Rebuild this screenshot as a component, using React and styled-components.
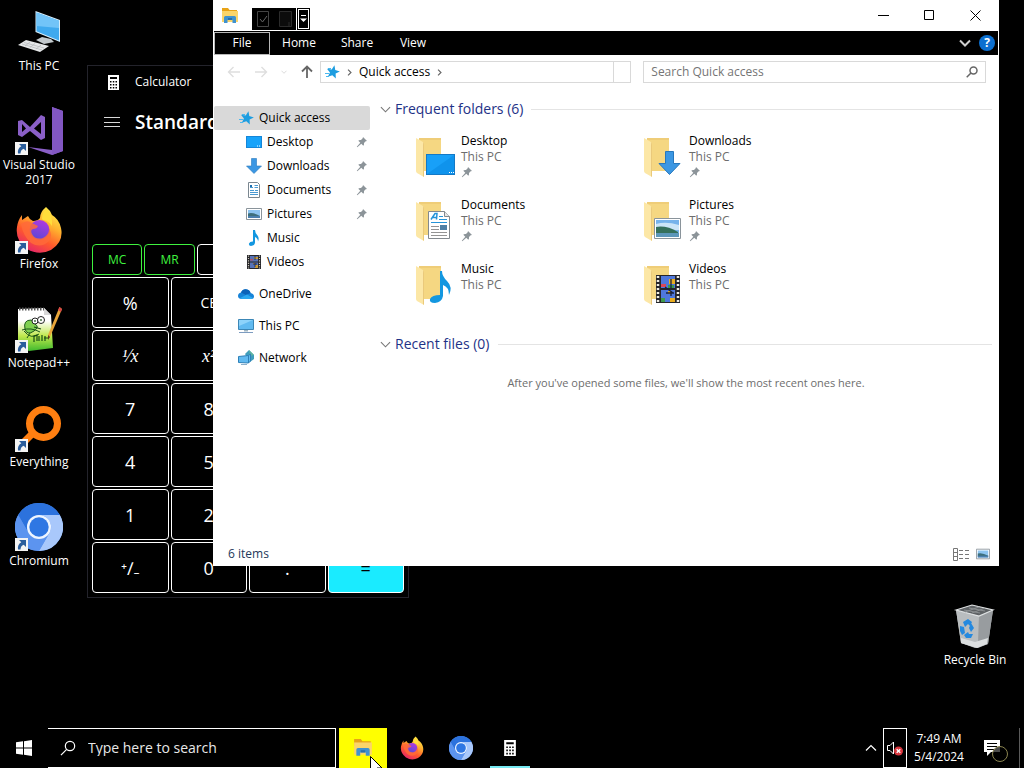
import React from "react";
import styled, { createGlobalStyle, css } from "styled-components";

const GlobalStyle = createGlobalStyle`
  *, *::before, *::after { box-sizing: border-box; }
  html, body { margin: 0; background: #000; }
  body, button, input {
    font-family: "Open Sans", "Noto Sans", sans-serif;
    font-size: 12px;
    line-height: 16px;
  }
  button { margin: 0; padding: 0; border: 0; background: none; color: inherit; cursor: default; }
  ul { list-style: none; margin: 0; padding: 0; }
  h1, h2, p { margin: 0; font-weight: 400; }
  svg { display: block; flex: none; }
`;

/* ---------- layout ---------- */

const Screen = styled.div`
  display: flex;
  flex-direction: column;
  height: 100vh;
  overflow: hidden;
  background: #000;
  color: #fff;
`;

const Desktop = styled.main`
  position: relative;
  flex: 1;
  min-height: 0;
`;

const IconColumn = styled.ul`
  display: flex;
  flex-direction: column;
  width: 78px;
  padding-top: 8px;
`;

const ShortcutCell = styled.li`
  height: 99px;
`;

const ShortcutButton = styled.button`
  display: flex;
  flex-direction: column;
  align-items: center;
  gap: 2px;
  width: 78px;
  line-height: 15px;
`;

const ShortcutArt = styled.span`
  position: relative;
  width: 48px;
  height: 48px;
`;

const ArrowBadge = styled.span`
  position: absolute;
  left: 0;
  bottom: 0;
`;

const BinSpot = styled.div`
  position: absolute;
  right: 10px;
  bottom: 61px;
`;

/* ---------- calculator ---------- */

const CalcWindow = styled.section`
  position: absolute;
  left: 87px;
  top: 65px;
  width: 322px;
  padding: 0 4px 4px;
  border: 1px solid #23232b;
  background: #000;
`;

const CalcTitle = styled.header`
  display: flex;
  align-items: center;
  gap: 16px;
  height: 32px;
  padding-left: 16px;
`;

const CalcMode = styled.div`
  display: flex;
  align-items: center;
  gap: 15px;
  height: 48px;
  padding-left: 12px;
`;

const CalcModeName = styled.h2`
  font-size: 19px;
  line-height: 24px;
  font-weight: 600;
`;

const CalcDisplay = styled.output`
  display: block;
  height: 98px;
`;

const MemoryRow = styled.div`
  display: grid;
  grid-template-columns: repeat(6, 1fr);
  gap: 2px;
  margin-bottom: 2px;
`;

const KeyGrid = styled.div`
  display: grid;
  grid-template-columns: repeat(4, 1fr);
  gap: 2px;
`;

const CalcKey = styled.button`
  height: ${(p) => (p.$memory ? 31 : 51)}px;
  border: 1px solid ${(p) => (p.$disabled ? "#3ff23f" : "#fff")};
  border-radius: 4px;
  color: ${(p) => (p.$disabled ? "#3ff23f" : "#fff")};
  font-size: ${(p) => (p.$memory ? 12 : p.$digit ? 18 : 14)}px;
  ${(p) =>
    p.$equals &&
    css`
      background: #1aebff;
      color: #000;
    `}
`;

/* ---------- explorer ---------- */

const ExplorerWindow = styled.section`
  position: absolute;
  left: 213px;
  right: 25px;
  top: 0;
  padding: 0 1px;
  background: #fff;
  color: #000;
`;

const TitleBar = styled.header`
  display: flex;
  justify-content: space-between;
  height: 31px;
`;

const QuickTools = styled.div`
  display: flex;
  align-items: center;
  padding: 7px 0 0 7px;
`;

const AppMark = styled.span`
  padding-bottom: 6px;
`;

const ToolBlock = styled.div`
  display: flex;
  align-items: center;
  gap: 9px;
  height: 22px;
  margin: 0 1px 0 13px;
  padding: 0 4px;
  background: #000;
`;

const ToolMenu = styled.button`
  display: grid;
  place-items: center;
  width: 13px;
  height: 22px;
  border: 1px solid #000;
  outline: 1px solid #fff;
  outline-offset: -2px;
  background: #000;
`;

const WindowButtons = styled.div`
  display: flex;
`;

const WindowButton = styled.button`
  display: grid;
  place-items: center;
  width: 46px;
  height: 30px;
`;

const Ribbon = styled.nav`
  display: flex;
  align-items: center;
  height: 24px;
  background: #000;
  color: #fff;
`;

const RibbonTab = styled.button`
  width: ${(p) => p.$width}px;
  height: 23px;
  ${(p) =>
    p.$boxed &&
    css`
      border: 1px solid #b8b8b8;
    `}
`;

const RibbonEnd = styled.div`
  display: flex;
  align-items: center;
  gap: 8px;
  margin-left: auto;
  padding-right: 3px;
`;

const HelpButton = styled.button`
  width: 16px;
  height: 16px;
  border-radius: 50%;
  background: #0b6fd0;
  color: #fff;
  font-weight: 700;
`;

const NavBar = styled.div`
  display: flex;
  align-items: center;
  height: 34px;
  padding: 0 12px 0 13px;
`;

const NavArrows = styled.div`
  display: flex;
  align-items: center;
  width: 93px;
  gap: 13px;
`;

const AddressBar = styled.div`
  display: flex;
  align-items: center;
  flex: 15 1 0;
  height: 22px;
  border: 1px solid #d9d9d9;
  padding-left: 3px;
  gap: 6px;
`;

const Refresh = styled.button`
  width: 17px;
  height: 20px;
  margin-left: auto;
  border-left: 1px solid #d9d9d9;
`;

const SearchField = styled.label`
  display: flex;
  align-items: center;
  flex: 16 1 0;
  height: 22px;
  margin-left: 12px;
  padding: 0 7px;
  border: 1px solid #d9d9d9;
`;

const SearchInput = styled.input`
  flex: 1;
  min-width: 0;
  padding: 0;
  border: 0;
  outline: 0;
  background: none;
  color: inherit;
  font-size: ${(p) => (p.$large ? 14 : 12)}px;
  &::placeholder { color: ${(p) => (p.$large ? "#e8e8e8" : "#757575")}; opacity: 1; }
`;

const ExplorerBody = styled.div`
  display: flex;
  min-height: 453px;
`;

const Sidebar = styled.nav`
  flex: 0 0 156px;
  padding-top: 17px;
`;

const SideItem = styled.a`
  display: flex;
  align-items: center;
  gap: 5px;
  height: 24px;
  margin-top: ${(p) => (p.$spaced ? 8 : 0)}px;
  padding-left: ${(p) => (p.$nested ? 32 : 24)}px;
  padding-right: 2px;
  border-radius: 2px;
  background: ${(p) => (p.$selected ? "#d9d9d9" : "transparent")};
  color: #000;
  text-decoration: none;
`;

const SideLabel = styled.span`
  flex: 1;
  white-space: nowrap;
`;

const Content = styled.div`
  flex: 1;
  min-width: 0;
  padding: 9px 6px 0 10px;
`;

const GroupHeader = styled.button`
  display: flex;
  align-items: center;
  gap: 4px;
  width: 100%;
  height: 22px;
  font-size: 14px;
  line-height: 22px;
  color: #1e3287;
  &::after {
    content: "";
    flex: 1;
    height: 1px;
    margin-left: 4px;
    background: #e4e4e4;
  }
`;

const FolderGrid = styled.ul`
  display: grid;
  grid-template-columns: repeat(auto-fill, 228px);
  grid-auto-rows: 64px;
  padding: 0 0 0 35px;
  margin: 13px 0 8px;
`;

const FolderItem = styled.a`
  display: flex;
  gap: 4px;
  color: #000;
  text-decoration: none;
`;

const FolderText = styled.span`
  display: flex;
  flex-direction: column;
`;

const Location = styled.span`
  color: #6d6d6d;
  margin-bottom: 1px;
`;

const EmptyNote = styled.p`
  margin-top: 20px;
  text-align: center;
  font-size: 11px;
  color: #6d6d6d;
`;

const StatusBar = styled.footer`
  display: flex;
  align-items: center;
  justify-content: space-between;
  height: 24px;
  padding: 0 8px 0 14px;
  color: #1e395b;
`;

const ViewButtons = styled.div`
  display: flex;
  gap: 6px;
`;

/* ---------- taskbar ---------- */

const Taskbar = styled.footer`
  display: flex;
  flex: none;
  height: 40px;
  background: #000;
`;

const TaskButton = styled.button`
  position: relative;
  display: grid;
  place-items: center;
  width: 48px;
  height: 40px;
  background: ${(p) => (p.$active ? "#ffff00" : "transparent")};
  ${(p) =>
    p.$running &&
    css`
      &::after {
        content: "";
        position: absolute;
        left: 4px;
        right: 4px;
        bottom: 0;
        height: 2px;
        background: #76e9f2;
      }
    `}
`;

const TaskSearch = styled.label`
  display: flex;
  align-items: center;
  gap: 12px;
  width: 288px;
  padding-left: 12px;
  border: 1px solid #fff;
  border-left: 0;
`;

const TaskApps = styled.div`
  display: flex;
  gap: 1px;
  margin-left: 3px;
`;

const Pointer = styled.span`
  position: absolute;
  left: 31px;
  top: 28px;
`;

const Tray = styled.div`
  display: flex;
  align-items: stretch;
  margin-left: auto;
`;

const TrayButton = styled.button`
  display: grid;
  place-items: center;
  width: ${(p) => p.$width}px;
  border: ${(p) => (p.$boxed ? "1px solid #fff" : "0")};
`;

const Clock = styled.button`
  width: 64px;
  line-height: 18px;
`;

const ShowDesktop = styled.button`
  width: 5px;
  border-left: 1px solid #5a5a5a;
`;

/* ---------- drawings ---------- */

const Svg = ({ s = 16, w, h, box, children }) => (
  <svg width={w || s} height={h || s} viewBox={box || `0 0 ${w || s} ${h || s}`} aria-hidden="true">
    {children}
  </svg>
);

const Badge = () => (
  <Svg s={13}>
    <path d="M0 0h13v13H0z" fill="#f4f4f4" />
    <path d="M4 2h7v7L8.700 6.700Q5.500 8 5.500 11.500H3Q2.200 6.500 6.300 4.300z" fill="#2a5d9c" />
  </Svg>
);

const ThisPcArt = () => (
  <Svg s={48}>
    <path d="M20.500 3 45 12V34L20.500 24z" fill="#d8eefb" />
    <path d="M21.500 4.500 44 12.800V32.500L21.500 23.300z" fill="#3fa9ee" />
    <path d="M21.500 4.500 44 12.800V20L21.500 18z" fill="#72c4f8" />
    <path d="M27 29l9 2 3 3-10 2-8-4z" fill="#c3c9cc" />
    <path d="M11 32 34 38 25 44 3 37z" fill="#e6e8e9" />
    <path d="M7 36l20 6M9 34.500l20 5.500M15 34l-5 4M20 35.500l-5 4M26 37l-5 4" stroke="#b4b8ba" strokeWidth=".7" fill="none" />
  </Svg>
);

const VisualStudioArt = () => (
  <Svg s={48}>
    <path d="M37 0 48 4V44L37 48 13 40 37 43z" fill="#8a5fc7" />
    <path d="M37 0 48 4V44L37 48z" fill="#8257c2" />
    <path d="M3 14 7 13 15 20 26 8 30 10V31L26 33 15 24 7 30 3 28zM7 17V25L11 21.500zM26 15 19 21.500 26 27z" fill="#8a5fc7" fillRule="evenodd" />
  </Svg>
);

const FirefoxArt = ({ size = 48 }) => (
  <svg width={size} height={size} viewBox="0 0 48 48" aria-hidden="true">
    <defs>
      <linearGradient id={`fx${size}`} x1=".8" y1="0" x2=".25" y2="1">
        <stop offset="0" stopColor="#fff44f" />
        <stop offset=".35" stopColor="#ffb02e" />
        <stop offset=".65" stopColor="#ff5a2c" />
        <stop offset="1" stopColor="#e3206f" />
      </linearGradient>
      <linearGradient id={`fp${size}`} x1=".7" y1="0" x2=".3" y2="1">
        <stop offset="0" stopColor="#b13ae0" />
        <stop offset="1" stopColor="#5847d6" />
      </linearGradient>
    </defs>
    <path d="M31 1Q35 4 37 9Q44 13 46 22Q49 36 36 44Q24 50 12 43Q0 34 2 21Q3 14 7 9V14L13 10Q14 13 18 15Q23 15 25 12Q25 6 31 1z" fill={`url(#fx${size})`} />
    <circle cx="24.500" cy="24" r="10" fill={`url(#fp${size})`} />
    <path d="M6 18Q12 13 17 17L23 20Q22 23 18 23Q15 24 17 28Q20 34 28 32Q34 29 34 23Q38 29 34 35Q26 43 16 37Q8 30 6 18z" fill="#ff6a39" opacity=".85" />
    <path d="M31 2Q38 9 37 20Q34 15 28 14Q25 12 31 2z" fill="#ffde3b" />
  </svg>
);

const NotepadArt = () => (
  <Svg s={48}>
    <defs>
      <linearGradient id="npp" x1="0" y1="0" x2="0" y2="1">
        <stop offset=".3" stopColor="#fff" />
        <stop offset=".65" stopColor="#bfe84c" />
        <stop offset="1" stopColor="#3fb92e" />
      </linearGradient>
    </defs>
    <path d="M3 4 29 3 36 10 38 43 14 46 3 41z" fill="url(#npp)" />
    <path d="M29 3v7h7z" fill="#d7d7d7" />
    <path d="M4 4h25" stroke="#555" strokeWidth="3" strokeDasharray="1.500 1.500" />
    <path d="M10 24Q8 15 16 15Q20 15 20 19Q25 22 19 26Q12 31 10 24z" fill="#7fd04f" stroke="#1b5719" strokeWidth="1" />
    <path d="M7 25Q16 22 25 27M9 26Q16 35 24 29M15 28l-3 5" fill="none" stroke="#1b5719" strokeWidth="1" />
    <circle cx="20" cy="16" r="3" fill="#fff" stroke="#222" />
    <circle cx="26" cy="15" r="3.500" fill="#fff" stroke="#222" />
    <path d="M20 15v2M26 14v2M19 22l7 2M19 37v-6l3-1v6M24 31v5M27 30v6M30 31v5M29 33h4" stroke="#174c15" strokeWidth="1.200" fill="none" />
    <path d="M44.500 2 47 4 35 32 33 34V30z" fill="#e9a63a" />
    <path d="M44.500 2 47 4 46 7 43 5z" fill="#d94545" />
    <path d="M33 30l2 2-2 3z" fill="#5a3b1b" />
  </Svg>
);

const EverythingArt = () => (
  <Svg s={48}>
    <path d="M18 29 8 39" stroke="#ff7f11" strokeWidth="7" />
    <circle cx="28.500" cy="19.500" r="14" fill="none" stroke="#ff7f11" strokeWidth="7" />
  </Svg>
);

const ChromiumArt = ({ size = 48 }) => (
  <svg width={size} height={size} viewBox="0 0 48 48" aria-hidden="true">
    <circle cx="24" cy="24" r="24" fill="#5b93ee" />
    <path d="M3.200 12A24 24 0 0 1 44.800 12H24A12 12 0 0 0 13.600 30z" fill="#2c72dd" />
    <path d="M44.800 12A24 24 0 0 1 24 48L34.400 30A12 12 0 0 0 24 12z" fill="#a9c8fb" />
    <path d="M3.200 12 13.600 30A12 12 0 0 0 34.400 30L24 48A24 24 0 0 1 3.200 12z" fill="#5c94ef" />
    <circle cx="24" cy="24" r="12" fill="#eef5ff" />
    <circle cx="24" cy="24" r="9.700" fill="#2f77e3" />
  </svg>
);

const RecycleArt = () => (
  <Svg s={48}>
    <path d="M5 8 42 8 37 42 24 46 10 41z" fill="#a8acae" />
    <path d="M5 8 28 14 27 46 10 41z" fill="#b9bdbf" />
    <path d="M28 14 42 8 37 42 27 46z" fill="#989c9f" />
    <path d="M5 8 21 3 42 8 28 14z" fill="#5e6265" stroke="#dfe2e3" strokeWidth="1.200" />
    <path d="M13 8l16 3M18 6l16 3M14 10l14-5M21 11l13-5" stroke="#8b8f91" fill="none" />
    <path d="M10 36 24 40 37 36 36 42 26 46 10 41z" fill="#dcdfe0" />
    <path d="M12 20l5-3 4 3-2 4-2-2-3 3zM20 21l3 5-3 4-2-4zM9 24l4 1 1 6-3 2-2-4zM13 33l4-3 1 2h4l-2 4h-5z" fill="#2489df" />
  </Svg>
);

const CalculatorIcon = ({ w = 11, h = 15 }) => (
  <svg width={w} height={h} viewBox="0 0 11 15" aria-hidden="true">
    <path d="M0 0h11v15H0zM2 2v2h7V2zM2 6v1.500h1.500V6zM4.800 6v1.500h1.500V6zM7.500 6v1.500H9V6zM2 9v1.500h1.500V9zM4.800 9v1.500h1.500V9zM7.500 9v1.500H9V9zM2 12v1.500h1.500V12zM4.800 12v1.500h1.500V12zM7.500 12v1.500H9V12z" fill="#fff" fillRule="evenodd" />
  </svg>
);

const ExplorerIcon = ({ w = 18, h = 16 }) => (
  <svg width={w} height={h} viewBox="0 0 18 16" aria-hidden="true">
    <path d="M1 0h6l1.500 2H16v4H1z" fill="#e8a317" />
    <path d="M1 3h16v11H1z" fill="#fbd56a" />
    <path d="M3 15V9.500Q3 8 4.500 8h9Q15 8 15 9.500V15h-3.500v-3h-5v3z" fill="#3f92cf" />
    <path d="M7 10h4v2H7z" fill="#2b6fa8" />
  </svg>
);

const Star = () => (
  <Svg>
    <path d="M9 1 10.800 5.700 15.600 6 11.900 9 13.100 13.800 9 11.200 4.900 13.800 6.100 9 2.400 6 7.200 5.700z" fill="#1d9de0" transform="rotate(12 9 8)" />
    <path d="M1 9.500h4M2 12.500h3M4 4.500h3" stroke="#4ab8ef" />
  </Svg>
);

const DesktopIcon = () => (
  <Svg>
    <path d="M0 2h16v12H0z" fill="#1586d8" />
    <path d="M1 3h14v10H1z" fill="#17a3fa" />
    <path d="M11 12h1m1 0h1" stroke="#fff" />
  </Svg>
);

const DownArrow = () => (
  <Svg>
    <path d="M5.500.5h5V8h5L8 15.500.5 8h5z" fill="#3b97e3" stroke="#2879be" strokeWidth=".6" />
  </Svg>
);

const DocIcon = () => (
  <Svg>
    <path d="M2.500.5h9l2 2v13h-11z" fill="#fff" stroke="#7b8790" />
    <path d="M4 5.500h3M8.500 3.500H12M8.500 5.500H12M4 8.500h4M9 8.500h3M4 10.500h8M4 12.500h8" stroke="#4a9ad2" />
    <path d="M4 4h2" stroke="#1d6fb0" strokeWidth="2" />
  </Svg>
);

const PictureIcon = ({ s = 16 }) => (
  <svg width={s} height={s} viewBox="0 0 16 16" aria-hidden="true">
    <path d="M.5 2.500h15v11H.5z" fill="#fff" stroke="#8a949b" />
    <path d="M2 4h12v8H2z" fill="#8cc4f0" />
    <path d="M2 7.500Q7 6 14 10v.5H2z" fill="#3d6f7c" />
    <path d="M2 10h12v2H2z" fill="#4a7fae" />
  </svg>
);

const MusicIcon = () => (
  <Svg>
    <path d="M7 0h2Q9 3 11.500 5.500Q13.500 8 12 11.500Q12 8.500 9 7V12.500Q8.800 15.500 5 16Q2.500 15.800 3 13.500Q4 11.300 7 11.500z" fill="#1397e0" />
  </Svg>
);

const VideoIcon = () => (
  <Svg>
    <path d="M1 1h14v14H1z" fill="#26262b" />
    <path d="M2.500 1.500v13M13.500 1.500v13" stroke="#c9c5b8" strokeWidth="1.200" strokeDasharray="1.200 1.200" />
    <path d="M4 2h8v5.500H4zM4 8.500h8V14H4z" fill="#5673b8" />
    <path d="M8 3h4v2H8zM9 11h3v3H9zM7 9h2v1H7z" fill="#c99a38" />
    <path d="M4 5h3v1.500H4z" fill="#a85368" />
    <path d="M9 2v4M7 10h4M9 9v4" stroke="#1a2446" strokeWidth=".8" />
  </Svg>
);

const OneDriveIcon = () => (
  <Svg>
    <path d="M4 13Q0 13 0 10Q0 7 3 6.500Q5 2.500 9 3.500Q12 4 12.500 7Q16 7.500 16 10.500Q16 13 13 13z" fill="#1683d8" />
    <path d="M3 6.500Q5 2.500 9 3.500Q12 4 12.500 7L8 9z" fill="#0b62b8" />
    <path d="M2 12 9 8.500 15 12Q14 13 13 13H4Q3 13 2 12z" fill="#2ba7ef" />
  </Svg>
);

const PcIcon = () => (
  <Svg>
    <path d="M.5 1.500h15v10H.5z" fill="#61baf0" stroke="#3c87b6" />
    <path d="M1 2h14L1 8z" fill="#8ed3fa" />
    <path d="M6 12h4v1.500H6z" fill="#a0b6c4" />
    <path d="M1 14.500h14" stroke="#7d9cc0" />
  </Svg>
);

const NetworkIcon = () => (
  <Svg>
    <path d="M7 4 11 0 16 5V9L12 12z" fill="#3f9dbb" />
    <path d="M11 0 16 5 12 6z" fill="#5fb3a0" />
    <path d="M.5 6.500 10.500 5.500 12.500 4V11L10.500 13 .5 12.500z" fill="#61baf0" stroke="#2d80b8" />
    <path d="M10.500 5.500V13" stroke="#2d80b8" />
    <path d="M3 14.500h6" stroke="#8db0cb" />
  </Svg>
);

const Pin = () => (
  <Svg s={12}>
    <path d="M7 1 11 5 9.700 5.300 8 7Q8.300 9 7.300 9.700L5.300 7.700 1.300 11.200.8 10.700 4.300 6.700 2.300 4.700Q3 3.700 5 4L6.700 2.300z" fill="#8c9499" />
  </Svg>
);

const Caret = ({ dir = "down", color = "#777", w = 11, width = 1.2 }) => {
  const turn = { down: 0, up: 180, right: -90 }[dir];
  return (
    <svg width={w} height={w} viewBox="0 0 12 12" aria-hidden="true">
      <path d="M1 3.500 6 8.500 11 3.500" fill="none" stroke={color} strokeWidth={width} transform={`rotate(${turn} 6 6)`} />
    </svg>
  );
};

const Arrow = ({ dir = "left", color = "#dedede", width = 1.4 }) => {
  const turn = { left: 0, right: 180, up: 90 }[dir];
  return (
    <Svg s={14}>
      <path d="M13 7H1.500M6.500 2 1.500 7l5 5" fill="none" stroke={color} strokeWidth={width} transform={`rotate(${turn} 7 7)`} />
    </Svg>
  );
};

const Lens = ({ s = 12, color = "#666", width = 1.5 }) => (
  <svg width={s} height={s} viewBox="0 0 12 12" aria-hidden="true">
    <circle cx="7.500" cy="4.500" r="3.500" fill="none" stroke={color} strokeWidth={width} />
    <path d="M5 7 .7 11.300" stroke={color} strokeWidth={width} />
  </svg>
);

const overlays = {
  desktop: (
    <g>
      <path d="M11 21h29v21H11z" fill="#1479c6" />
      <path d="M12 22h27v19H12z" fill="#18a0f8" />
      <path d="M12 41 39 22v19z" fill="#0f93ec" />
      <path d="M34 39.500h5" stroke="#fff" strokeDasharray="1 1" />
    </g>
  ),
  downloads: <path d="M22.500 18.500h8v12h6.500L26.500 41.500 16 30.500h6.500z" fill="#3b97e3" stroke="#2778bd" />,
  documents: (
    <g>
      <path d="M13.500 14.500h16l5 5v22h-21z" fill="#fff" stroke="#83898e" />
      <path d="M29.500 14.500v5h5" fill="#e7e7e7" stroke="#83898e" />
      <path d="M16 22.500 20 16.500h2l-.5 6M18 20.500h4" fill="none" stroke="#2594d9" strokeWidth="1.500" />
      <path d="M24 19.500h4M24 22.500h8M16 25.500h16" stroke="#2594d9" />
      <path d="M16 29.500h8M16 32.500h8M16 35.500h16M16 38.500h16" stroke="#949494" />
      <path d="M25 28h7v5h-7z" fill="#4f7fa5" />
    </g>
  ),
  pictures: (
    <g>
      <path d="M11.500 21.500h26v20h-26z" fill="#fff" stroke="#8a949b" />
      <path d="M13 23h23v17H13z" fill="#76b3eb" />
      <path d="M13 27q10-3 23 1v5H13z" fill="#cbe5f8" />
      <path d="M13 30q10-2 22 5v1H13z" fill="#34705c" />
      <path d="M13 36h23v4H13z" fill="#5c97ba" />
    </g>
  ),
  music: <path d="M25 10h2Q27 15 32 20Q38 26 34 34Q34 26 28 24V35Q27 41 20 42Q14 42 15 38Q17 34 25 34z" fill="#1397e0" />,
  videos: (
    <g>
      <path d="M13 14h24v28H13z" fill="#26262b" />
      <path d="M15 15v26M35 15v26" stroke="#f0eee4" strokeWidth="2.500" strokeDasharray="2 2" />
      <path d="M18 15h14v12H18zM18 29h14v12H18z" fill="#4f78dc" />
      <path d="M26 18h6v5h-6zM27 37h5v4h-5zM25 30h3v3h-3z" fill="#e9ad20" />
      <path d="M18 23h5v3h-5z" fill="#db4858" />
      <path d="M25 24h6v3h-6zM18 37h4v4h-4z" fill="#3e9a4c" />
      <path d="M28 18v9M23 32h8M28 30v5M22 26l8 6" stroke="#18223f" strokeWidth="1.300" />
    </g>
  ),
};

const FolderArt = ({ kind }) => (
  <svg width="42" height="48" viewBox="0 0 42 48" aria-hidden="true">
    <path d="M4 5h22v33H4z" fill="#f5d782" />
    <path d="M4 5h22v2H4z" fill="#efcd78" />
    <path d="M1 5 8 9Q9 10 9 12V44L2 40Q1 39 1 38z" fill="#fce7a6" />
    <path d="M8 9Q9 10 9 12V44L8 43z" fill="#eac97b" />
    {overlays[kind]}
  </svg>
);

/* ---------- data ---------- */

const shortcuts = [
  { name: "This PC", art: <ThisPcArt />, plain: true },
  { name: "Visual Studio 2017", art: <VisualStudioArt /> },
  { name: "Firefox", art: <FirefoxArt /> },
  { name: "Notepad++", art: <NotepadArt /> },
  { name: "Everything", art: <EverythingArt /> },
  { name: "Chromium", art: <ChromiumArt /> },
];

const memoryKeys = [
  { label: "MC", disabled: true },
  { label: "MR", disabled: true },
  { label: "M+" },
  { name: "Memory subtract" },
  { name: "Memory store" },
  { name: "Memory list" },
];

const keys = [
  { label: "%" }, { label: "CE", small: true }, { name: "Clear" }, { name: "Backspace" },
  { label: "¹⁄x", math: true }, { label: "x²", math: true }, { name: "Square root" }, { name: "Divide" },
  { label: "7" }, { label: "8" }, { name: "Nine" }, { name: "Multiply" },
  { label: "4" }, { label: "5" }, { name: "Six" }, { name: "Minus" },
  { label: "1" }, { label: "2" }, { name: "Three" }, { name: "Plus" },
  { label: "⁺∕₋" }, { label: "0" }, { label: "." }, { label: "=", equals: true },
];

const KeyLabel = styled.span`
  font-family: ${(p) => (p.$math ? '"Liberation Serif", serif' : "inherit")};
  font-style: ${(p) => (p.$math ? "italic" : "normal")};
`;

const sideItems = [
  { name: "Quick access", icon: <Star />, selected: true },
  { name: "Desktop", icon: <DesktopIcon />, nested: true, pinned: true },
  { name: "Downloads", icon: <DownArrow />, nested: true, pinned: true },
  { name: "Documents", icon: <DocIcon />, nested: true, pinned: true },
  { name: "Pictures", icon: <PictureIcon />, nested: true, pinned: true },
  { name: "Music", icon: <MusicIcon />, nested: true },
  { name: "Videos", icon: <VideoIcon />, nested: true },
  { name: "OneDrive", icon: <OneDriveIcon />, spaced: true },
  { name: "This PC", icon: <PcIcon />, spaced: true },
  { name: "Network", icon: <NetworkIcon />, spaced: true },
];

const folders = [
  { name: "Desktop", kind: "desktop", pinned: true },
  { name: "Downloads", kind: "downloads", pinned: true },
  { name: "Documents", kind: "documents", pinned: true },
  { name: "Pictures", kind: "pictures", pinned: true },
  { name: "Music", kind: "music" },
  { name: "Videos", kind: "videos" },
];

/* ---------- parts ---------- */

const Shortcut = ({ name, art, plain }) => (
  <ShortcutButton>
    <ShortcutArt>
      {art}
      {!plain && <ArrowBadge><Badge /></ArrowBadge>}
    </ShortcutArt>
    {name}
  </ShortcutButton>
);

const Calculator = () => (
  <CalcWindow aria-label="Calculator">
    <CalcTitle>
      <CalculatorIcon />
      <span>Calculator</span>
    </CalcTitle>
    <CalcMode>
      <button aria-label="Open navigation">
        <Svg><path d="M0 3.500h16M0 8.500h16M0 12.500h16" stroke="#d8d8d8" /></Svg>
      </button>
      <CalcModeName>Standard</CalcModeName>
    </CalcMode>
    <CalcDisplay />
    <MemoryRow>
      {memoryKeys.map((k) => (
        <CalcKey key={k.label || k.name} $memory $disabled={k.disabled} aria-label={k.name}>{k.label}</CalcKey>
      ))}
    </MemoryRow>
    <KeyGrid>
      {keys.map((k) => (
        <CalcKey key={k.label || k.name} $digit={!k.small} $equals={k.equals} aria-label={k.name}>
          <KeyLabel $math={k.math}>{k.label}</KeyLabel>
        </CalcKey>
      ))}
    </KeyGrid>
  </CalcWindow>
);

const Explorer = () => (
  <ExplorerWindow aria-label="File Explorer">
    <TitleBar>
      <QuickTools>
        <AppMark><ExplorerIcon /></AppMark>
        <ToolBlock>
          <button aria-label="Properties">
            <Svg w={14} h={16}>
              <path d="M1.500.5h11v15h-11z" fill="none" stroke="#444" />
              <path d="M4 8l2.500 3L11 5" fill="none" stroke="#666" />
            </Svg>
          </button>
          <button aria-label="New folder">
            <Svg w={13} h={16}><path d="M.5.5h12v15H.5zM10 11v4" fill="#0c0c0c" stroke="#2b2b2b" /></Svg>
          </button>
        </ToolBlock>
        <ToolMenu aria-label="Customize toolbar">
          <Svg w={7} h={8}><path d="M1 .5h5" stroke="#fff" /><path d="M0 3.500h7L3.500 7z" fill="#fff" /></Svg>
        </ToolMenu>
      </QuickTools>
      <WindowButtons>
        <WindowButton aria-label="Minimize"><Svg s={11}><path d="M0 5.500h11" stroke="#000" /></Svg></WindowButton>
        <WindowButton aria-label="Maximize"><Svg s={10}><path d="M.5.5h9v9h-9z" fill="none" stroke="#000" /></Svg></WindowButton>
        <WindowButton aria-label="Close"><Svg s={11}><path d="M.5.5l10 10M10.500.5l-10 10" stroke="#000" /></Svg></WindowButton>
      </WindowButtons>
    </TitleBar>
    <Ribbon>
      <RibbonTab $boxed $width={56}>File</RibbonTab>
      <RibbonTab $width={58}>Home</RibbonTab>
      <RibbonTab $width={58}>Share</RibbonTab>
      <RibbonTab $width={54}>View</RibbonTab>
      <RibbonEnd>
        <button aria-label="Expand the ribbon"><Caret color="#cfcfcf" w={12} width={2} /></button>
        <HelpButton aria-label="Help">?</HelpButton>
      </RibbonEnd>
    </Ribbon>
    <NavBar>
      <NavArrows>
        <button aria-label="Back"><Arrow /></button>
        <button aria-label="Forward"><Arrow dir="right" /></button>
        <button aria-label="Recent locations"><Caret color="#c4c4c4" w={6} /></button>
        <button aria-label="Up"><Arrow dir="up" color="#666" width={1.8} /></button>
      </NavArrows>
      <AddressBar>
        <Star />
        <Caret dir="right" color="#666" w={7} width={2} />
        <button>Quick access</button>
        <Caret dir="right" color="#666" w={7} width={2} />
        <Refresh aria-label="Refresh" />
      </AddressBar>
      <SearchField>
        <SearchInput type="text" placeholder="Search Quick access" aria-label="Search Quick access" />
        <Lens />
      </SearchField>
    </NavBar>
    <ExplorerBody>
      <Sidebar>
        {sideItems.map((it) => (
          <SideItem key={it.name} href="#" $selected={it.selected} $nested={it.nested} $spaced={it.spaced}>
            {it.icon}
            <SideLabel>{it.name}</SideLabel>
            {it.pinned && <Pin />}
          </SideItem>
        ))}
      </Sidebar>
      <Content>
        <GroupHeader><Caret />Frequent folders (6)</GroupHeader>
        <FolderGrid>
          {folders.map((f) => (
            <li key={f.name}>
              <FolderItem href="#">
                <FolderArt kind={f.kind} />
                <FolderText>
                  <span>{f.name}</span>
                  <Location>This PC</Location>
                  {f.pinned && <Pin />}
                </FolderText>
              </FolderItem>
            </li>
          ))}
        </FolderGrid>
        <GroupHeader><Caret />Recent files (0)</GroupHeader>
        <EmptyNote>After you've opened some files, we'll show the most recent ones here.</EmptyNote>
      </Content>
    </ExplorerBody>
    <StatusBar>
      <span>6 items</span>
      <ViewButtons>
        <button aria-label="Details view">
          <Svg w={18} h={13}>
            <path d="M1.500.5h4v12h-4zM1.500 4.500h4M1.500 8.500h4" fill="none" stroke="#777" />
            <path d="M7 2.500h4M13 2.500h4M7 6.500h4M13 6.500h4M7 10.500h4M13 10.500h4" stroke="#777" />
          </Svg>
        </button>
        <button aria-label="Large icons view"><PictureIcon s={14} /></button>
      </ViewButtons>
    </StatusBar>
  </ExplorerWindow>
);

const Bar = () => (
  <Taskbar>
    <TaskButton aria-label="Start">
      <Svg>
        <path d="M0 2.300 7 1.300V7.500H0zM8 1.200 16 0V7.500H8zM0 8.500H7V14.700L0 13.700zM8 8.500H16V16L8 14.800z" fill="#fff" />
      </Svg>
    </TaskButton>
    <TaskSearch>
      <Lens s={16} color="#fff" width={0.9} />
      <SearchInput $large type="text" placeholder="Type here to search" aria-label="Type here to search" />
    </TaskSearch>
    <TaskApps>
      <TaskButton $active aria-label="File Explorer">
        <ExplorerIcon w={20} h={18} />
        <Pointer>
          <Svg w={12} h={19}>
            <path d="M.5.5v16l4-3.500 2.500 5.500 2.500-1-2.500-5.500h5z" fill="#fff" stroke="#000" />
          </Svg>
        </Pointer>
      </TaskButton>
      <TaskButton aria-label="Firefox"><FirefoxArt size={24} /></TaskButton>
      <TaskButton aria-label="Chromium"><ChromiumArt size={24} /></TaskButton>
      <TaskButton $running aria-label="Calculator"><CalculatorIcon w={12} h={16} /></TaskButton>
    </TaskApps>
    <Tray>
      <TrayButton $width={24} aria-label="Show hidden icons"><Caret dir="up" color="#fff" w={12} /></TrayButton>
      <TrayButton $width={24} $boxed aria-label="Volume muted">
        <Svg w={16} h={16}>
          <path d="M.5 5.500H3L6.500 2v12L3 10.500H.5z" fill="none" stroke="#fff" />
          <circle cx="11.500" cy="11" r="4.500" fill="#d9363e" />
          <path d="M9.700 9.200l3.600 3.600M13.300 9.200l-3.600 3.600" stroke="#fff" strokeWidth="1.400" />
        </Svg>
      </TrayButton>
      <Clock>7:49 AM<br />5/4/2024</Clock>
      <TrayButton $width={48} aria-label="Notifications">
        <Svg w={28} h={28}>
          <path d="M3 6h16v12h-9l-4 4v-4H3z" fill="#fff" />
          <path d="M6 9.500h10M6 12.500h10M6 15.500h7" stroke="#000" />
          <circle cx="19" cy="20" r="7.500" fill="#000" fillOpacity=".7" stroke="#8a8450" />
        </Svg>
      </TrayButton>
      <ShowDesktop aria-label="Show desktop" />
    </Tray>
  </Taskbar>
);

export default function App() {
  return (
    <Screen>
      <GlobalStyle />
      <Desktop>
        <IconColumn>
          {shortcuts.map((s) => (
            <ShortcutCell key={s.name}><Shortcut {...s} /></ShortcutCell>
          ))}
        </IconColumn>
        <BinSpot><Shortcut name="Recycle Bin" art={<RecycleArt />} plain /></BinSpot>
        <Calculator />
        <Explorer />
      </Desktop>
      <Bar />
    </Screen>
  );
}
